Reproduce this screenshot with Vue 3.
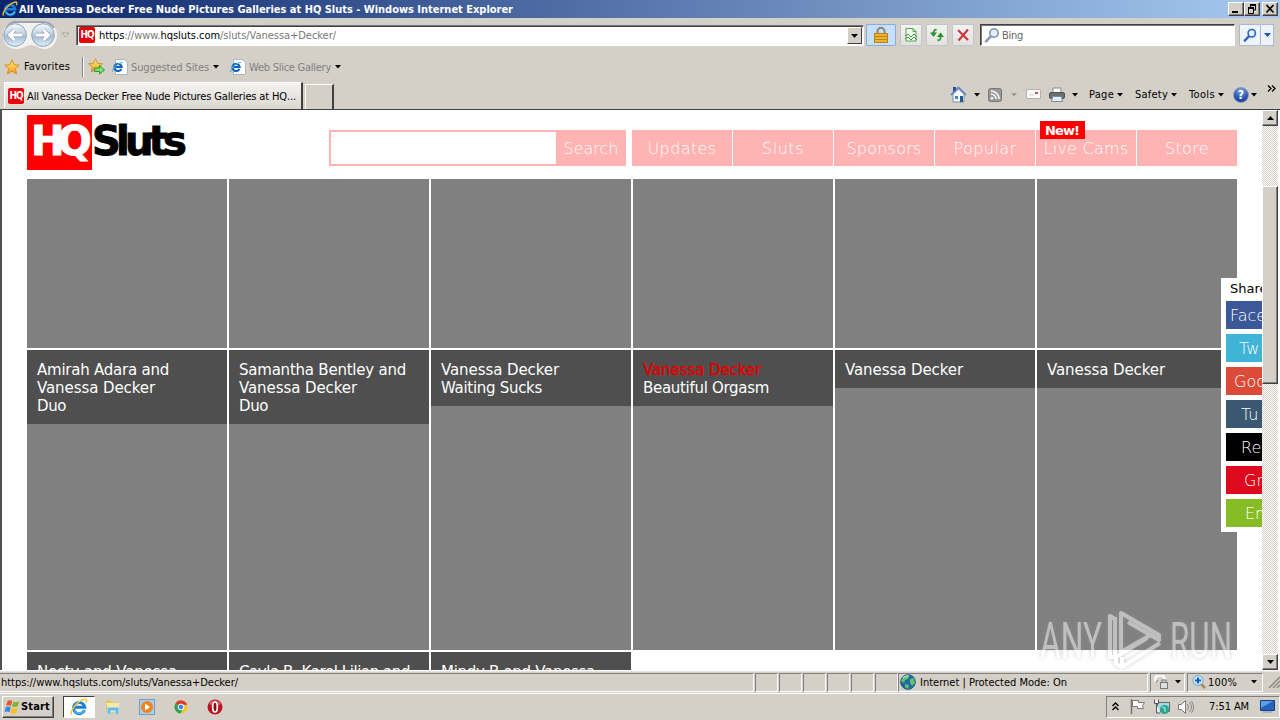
<script setup>
// Spreads or tightens the letters of a label so that it fills the given width.
const vFit = {
  mounted(el, { value }) {
    const n = el.textContent.length
    const natural = el.getBoundingClientRect().width
    el.style.letterSpacing = (value - natural) / n + 'px'
  }
}

const nav = [
  { text: 'Updates', w: 69 },
  { text: 'Sluts', w: 42 },
  { text: 'Sponsors', w: 75 },
  { text: 'Popular', w: 63 },
  { text: 'Live Cams', w: 85, isNew: true },
  { text: 'Store', w: 44 }
]

const galleries = [
  [['Amirah Adara and', 132], ['Vanessa Decker', 118], ['Duo', 29]],
  [['Samantha Bentley and', 167], ['Vanessa Decker', 118], ['Duo', 29]],
  [['Vanessa Decker', 118], ['Waiting Sucks', 101]],
  [['Vanessa Decker', 118, true], ['Beautiful Orgasm', 126]],
  [['Vanessa Decker', 118]],
  [['Vanessa Decker', 118]]
]

const nextRow = [
  ['Nesty and Vanessa', 140],
  ['Cayla B, Karol Lilian and', 171],
  ['Mindy B and Vanessa', 154]
]

const share = [
  { text: 'Face', color: '#3b5998', pad: 4 },
  { text: 'Tw', color: '#40b4d6', pad: 13 },
  { text: 'Goo', color: '#dc4a38', pad: 8 },
  { text: 'Tu', color: '#3b5872', pad: 15 },
  { text: 'Re', color: '#000000', pad: 15 },
  { text: 'Gr', color: '#dc0a1c', pad: 18 },
  { text: 'Em', color: '#86bd24', pad: 19 }
]
</script>

<template>
  <div class="window">
    <svg class="defs" width="0" height="0">
      <defs>
        <linearGradient id="ball" x1="0" y1="0" x2="0" y2="1">
          <stop offset="0" stop-color="#f4f8fc" /><stop offset=".45" stop-color="#c3d3e4" />
          <stop offset=".55" stop-color="#a5bcd3" /><stop offset="1" stop-color="#dff1fb" />
        </linearGradient>
        <linearGradient id="gold" x1="0" y1="0" x2="0" y2="1">
          <stop offset="0" stop-color="#fff08a" /><stop offset="1" stop-color="#f29a13" />
        </linearGradient>
        <symbol id="ie" viewBox="0 0 16 16">
          <path d="M12.9 10.6A5 5 0 1 1 13.1 8.2H4.5" fill="none" stroke="#1c7fd4" stroke-width="2.6" />
          <path d="M12.9 10.6A5 5 0 0 1 4 11" fill="none" stroke="#55baf1" stroke-width="1.2" />
          <path d="M1.6 14.6C-.6 12.4 5.5 3.5 12 1.3c3-1 3.500.7 2.300 3" fill="none" stroke="#f3c43a" stroke-width="1.3" />
        </symbol>
        <symbol id="iepage" viewBox="0 0 16 16">
          <path d="M3.500.5h9l3 3v12h-12z" fill="#fff" stroke="#a9b7c5" />
          <path d="M9.300 10A3.600 3.600 0 1 1 9.600 8H3" fill="none" stroke="#1463b8" stroke-width="2.2" />
          <path d="M.8 13C-.1 10.5 5 4 11 3.300" fill="none" stroke="#55b4e8" stroke-width="1.1" />
        </symbol>
        <symbol id="star" viewBox="0 0 16 16">
          <path d="M8 .8l2.100 4.800 5.200.5-3.900 3.500 1.200 5.300L8 12.200l-4.600 2.700 1.200-5.300L.7 6.100l5.200-.5z" fill="url(#gold)" stroke="#d18a1b" stroke-width=".9" />
        </symbol>
        <symbol id="lens" viewBox="0 0 16 16">
          <path d="M7.200 9L2 14.400" stroke-width="2.6" stroke="currentColor" stroke-linecap="round" />
          <circle cx="10" cy="6" r="4.2" fill="#e4f0fb" stroke="currentColor" stroke-width="1.8" />
        </symbol>
      </defs>
    </svg>

    <header class="titlebar">
      <svg class="i16" viewBox="0 0 16 16"><use href="#ie" /></svg>
      <b v-fit="494">All Vanessa Decker Free Nude Pictures Galleries at HQ Sluts - Windows Internet Explorer</b>
      <div class="winbtns">
        <i><svg width="14" height="12"><path d="M3 9h6" stroke="#000" stroke-width="2" /></svg></i>
        <i><svg width="14" height="12"><path d="M5 2.500h6M5.500 2v3M10.500 2v5H9M3 5.500h5.500M3.500 5v5.500h5V5" fill="none" stroke="#000" /><path d="M5 2h6M3 5h6" stroke="#000" stroke-width="2" /></svg></i>
        <i class="close"><svg width="14" height="12"><path d="M3.500 2l7 7.500M10.500 2l-7 7.500" stroke="#000" stroke-width="1.700" /></svg></i>
      </div>
    </header>

    <div class="addressrow">
      <svg class="travel" width="56" height="30" viewBox="0 0 56 30">
        <path d="M13 2h30c8 1 12 6 12 13s-5 14-12 14c-6 0-9-4-14-4s-8 4-14 4C6 29 1 23 1 15S6 2 13 2z" fill="#f3f2ef" />
        <path d="M4 8Q9 1 15 2h26q7 0 11 6" fill="none" stroke="#9fa3ae" stroke-width="2" />
        <circle cx="13" cy="15" r="11.300" fill="url(#ball)" stroke="#8fa3b8" />
        <circle cx="41" cy="15" r="11.300" fill="url(#ball)" stroke="#8fa3b8" />
        <path d="M20 15H8M12.500 10L7.500 15l5 5M34 15h12M41.500 10l5 5-5 5" fill="none" stroke="#8fa3ba" stroke-width="4.400" />
        <path d="M20 15H8M12.500 10L7.500 15l5 5M34 15h12M41.500 10l5 5-5 5" fill="none" stroke="#fff" stroke-width="3" />
      </svg>
      <svg class="hist" width="9" height="6"><path d="M1 1h7L4.500 5z" fill="#ddd8d0" stroke="#aaa59d" /></svg>
      <div class="address">
        <span class="hq">HQ</span>
        <span class="url" v-fit="237">https<em>://www.</em>hqsluts.com<em>/sluts/Vanessa+Decker/</em></span>
        <i class="drop"><svg width="7" height="4"><path d="M0 0h7L3.500 4z" /></svg></i>
      </div>
      <div class="tool lock">
        <svg width="16" height="18" viewBox="0 0 16 18"><path d="M4.500 9V5.500a3.500 3.700 0 0 1 7 0V9" fill="none" stroke="#8c8570" stroke-width="2" /><rect x="1.500" y="7.500" width="13" height="9" fill="#eeb52c" stroke="#b9821c" /><path d="M2 10.500h12M2 13.500h12" stroke="#bb8421" /></svg>
      </div>
      <div class="tool t1"><svg width="14" height="16" viewBox="0 0 14 16"><path d="M2 1.500h7l3 3v9.500H2zM9 1.500v3h3" fill="#f3fbf0" stroke="#57a257" /><path d="M1 9l3-2 3 3 3-3 3 3M1 12l3-2 3 3 3-3 3 3" fill="none" stroke="#3e963e" /></svg></div>
      <div class="tool t2"><svg width="16" height="16" viewBox="0 0 16 16"><path d="M7.500 3Q4.500 2 4.500 7" fill="none" stroke="#38a33b" stroke-width="2" /><path d="M1 5.500h7L4.500 10z" fill="#249027" /><path d="M8.500 13Q12 14 11.500 9" fill="none" stroke="#38a33b" stroke-width="2" /><path d="M8 10h7l-3.500-4.500z" fill="#249027" /></svg></div>
      <div class="tool t3"><svg width="14" height="14"><path d="M2 2l10 10M12 1.500L2.500 12.500" stroke="#cf3a42" stroke-width="2.200" /></svg></div>
      <div class="search">
        <svg class="i16 grey" viewBox="0 0 16 16"><use href="#lens" /></svg><span v-fit="21">Bing</span>
      </div>
      <div class="tool go"><svg class="i14 blue" viewBox="0 0 16 16"><use href="#lens" /></svg></div>
      <div class="tool godrop"><svg width="7" height="4"><path d="M0 0h7L3.500 4z" fill="#1b58b5" /></svg></div>
    </div>

    <div class="favrow">
      <svg class="i16" viewBox="0 0 16 16"><use href="#star" /></svg>
      <span class="fav" v-fit="46">Favorites</span>
      <i class="sep"></i>
      <svg class="i17" viewBox="0 0 17 17"><g transform="scale(.94)"><use href="#star" width="16" height="16" /></g><path d="M6.500 10h5V7.500l5 4.500-5 4v-2.500h-5z" fill="#7be06c" stroke="#2b9a31" /></svg>
      <svg class="i16 p1" viewBox="0 0 16 16"><use href="#iepage" /></svg>
      <span class="dim" v-fit="78">Suggested Sites</span>
      <svg class="car" width="6" height="4"><path d="M0 0h6L3 3.500z" /></svg>
      <svg class="i16 p2" viewBox="0 0 16 16"><use href="#iepage" /></svg>
      <span class="dim" v-fit="82">Web Slice Gallery</span>
      <svg class="car" width="6" height="4"><path d="M0 0h6L3 3.500z" /></svg>
    </div>

    <div class="tabrow">
      <div class="tab"><span class="hq">HQ</span><span v-fit="269">All Vanessa Decker Free Nude Pictures Galleries at HQ...</span></div>
      <div class="newtab"></div>
      <div class="cmds">
        <svg width="17" height="17" viewBox="0 0 17 17"><path d="M3 8v8h11V8L8.500 3z" fill="#f7fafe" stroke="#8092aa" /><path d="M1 9l7.500-7.500L16 9" fill="none" stroke="#668bc4" stroke-width="1.800" /><path d="M3 1h3v3L3 6z" fill="#2d4fa0" /><path d="M10 10h3v6h-3z" fill="#23588f" /><path d="M5 10h3v3H5z" fill="#3b8ad0" /></svg>
        <svg class="c1" width="6" height="4"><path d="M0 0h6L3 3.500z" /></svg>
        <svg class="c2" width="14" height="14"><rect x=".5" y=".5" width="13" height="13" rx="2" fill="#999" stroke="#777" /><path d="M3 6a5 5 0 0 1 5 5M3 3a8 8 0 0 1 8 8" fill="none" stroke="#fff" stroke-width="1.500" /><circle cx="4" cy="10.300" r="1.200" fill="#fff" /></svg>
        <svg class="c3" width="6" height="4"><path d="M0 0h6L3 3.500z" fill="#999" /></svg>
        <svg class="c4" width="15" height="11"><path d="M.5.5h14v9H.5z" fill="#fafafa" stroke="#b5b1ae" /><path d="M9 3h3v2H9z" fill="#cf5260" /><path d="M3 6h5" stroke="#ccc" /></svg>
        <svg class="c5" width="16" height="16" viewBox="0 0 16 16"><path d="M4 1h8v5H4z" fill="#fff" stroke="#888" /><rect x=".5" y="5.500" width="15" height="6" rx="1.500" fill="#6b6e73" stroke="#505257" /><path d="M3.500 9.500h9l1 5h-11z" fill="#e5effa" stroke="#7c8ba1" /></svg>
        <svg class="c6" width="6" height="4"><path d="M0 0h6L3 3.500z" /></svg>
        <span class="c7" v-fit="25">Page</span><svg class="c8" width="6" height="4"><path d="M0 0h6L3 3.500z" /></svg>
        <span class="c9" v-fit="33">Safety</span><svg class="c8" width="6" height="4"><path d="M0 0h6L3 3.500z" /></svg>
        <span class="c9" v-fit="26">Tools</span><svg class="c8" width="6" height="4"><path d="M0 0h6L3 3.500z" /></svg>
        <span class="help">?</span><svg class="c10" width="6" height="4"><path d="M0 0h6L3 3.500z" /></svg>
        <svg class="more" width="9" height="7"><path d="M1 .5l3 3-3 3M5 .5l3 3-3 3" fill="none" stroke="#000" stroke-width="1.300" /></svg>
      </div>
    </div>

    <div class="viewport">
      <main class="page">
        <div class="head">
          <div class="logo"><b class="logo-hq"><span v-fit="54">HQ</span></b><b class="logo-s" v-fit="90">Sluts</b></div>
          <div class="find"><div class="box"></div><div class="btn"><span v-fit="55">Search</span></div></div>
          <nav>
            <a v-for="n in nav" :key="n.text"><span v-fit="n.w">{{ n.text }}</span><b v-if="n.isNew" class="new"><span v-fit="34">New!</span></b></a>
          </nav>
        </div>
        <div class="grid">
          <div v-for="i in 6" :key="'a' + i" class="card"></div>
          <div v-for="(g, i) in galleries" :key="'b' + i" class="card">
            <div class="cap"><div v-for="(l, j) in g" :key="j" :class="{ hot: l[2] }"><span v-fit="l[1]">{{ l[0] }}</span></div></div>
          </div>
          <div v-for="(l, i) in nextRow" :key="'c' + i" class="card">
            <div class="cap"><div><span v-fit="l[1]">{{ l[0] }}</span></div></div>
          </div>
        </div>
        <aside class="share">
          <p>Share</p>
          <div v-for="s in share" :key="s.text" :style="{ background: s.color, paddingLeft: s.pad + 'px' }">{{ s.text }}</div>
        </aside>
        <svg class="mark" width="210" height="66" viewBox="0 0 210 66">
          <g fill="#fff" font-family="Roboto, sans-serif" font-size="50">
            <text x="4" y="50" textLength="62" lengthAdjust="spacingAndGlyphs">ANY</text>
            <text x="134" y="50" textLength="62" lengthAdjust="spacingAndGlyphs">RUN</text>
          </g>
          <path d="M79 10l-5-3v41h5V8M85 43V4l38 22v5L92 13M86 48V58L124 34M85 43l35-20M86 58l-6-3v-7L111 29" transform="translate(0 1)" fill="none" stroke="#fff" stroke-width="4" stroke-linejoin="round" />
        </svg>
      </main>
      <div class="scroll">
        <i class="sb"><svg width="7" height="4"><path d="M0 4h7L3.500 0z" /></svg></i>
        <i class="thumb"></i>
        <i class="sb"><svg width="7" height="4"><path d="M0 0h7L3.500 4z" /></svg></i>
      </div>
    </div>

    <footer class="status">
      <div class="cell main"><span v-fit="237">https://www.hqsluts.com/sluts/Vanessa+Decker/</span></div>
      <div v-for="i in 6" :key="i" class="cell small"></div>
      <div class="cell zone">
        <svg width="16" height="16" viewBox="0 0 16 16"><circle cx="8" cy="8" r="7.300" fill="#2566a9" stroke="#234e85" /><path d="M3 3q4-3 6-1l-1 3-3 1-1 3-3-2zM10 5l4-1 1 5-3 3-2-3zM5 10l4 1-1 4-3-2z" fill="#59c668" /><path d="M3 4q3-3 6-2" stroke="#bdf0ff" fill="none" /></svg>
        <span v-fit="147">Internet | Protected Mode: On</span>
      </div>
      <div class="cell prot"><svg width="15" height="14" viewBox="0 0 15 14"><path d="M1 7a5 5 0 0 1 10-3" fill="none" stroke="#f8f8f8" stroke-width="3" /><path d="M2 8l2-3" stroke="#888" /><rect x="6.500" y="7.500" width="7" height="6" fill="#ddd" stroke="#777" /><path d="M8 7V5h4v2" fill="none" stroke="#777" /></svg><svg width="6" height="4"><path d="M0 0h6L3 3.500z" /></svg></div>
      <div class="cell zoom"><svg width="14" height="14" viewBox="0 0 14 14"><path d="M8 8l5 5" stroke="#a98c58" stroke-width="2.500" /><circle cx="6" cy="5.500" r="5" fill="#cbe7fd" stroke="#6fa6dc" /><path d="M6 2.500v6M3 5.500h6" stroke="#1462bf" stroke-width="2" /></svg><span v-fit="29">100%</span><svg class="zc" width="6" height="4"><path d="M0 0h6L3 3.500z" /></svg></div>
      <svg class="grip" width="12" height="12"><path d="M1 12L12 1M5 12l7-7M9 12l3-3" stroke="#8c8880" stroke-width="1.500" /></svg>
    </footer>

    <div class="taskbar">
      <div class="start">
        <svg width="17" height="16" viewBox="0 0 17 16"><path d="M3.500 2q2-1.500 4.700 0L7 7Q4 5.500 2 7z" fill="#e5572a" /><path d="M9.200 2.600q3 1.400 6-.6L14 7q-3 1.500-6 .5z" fill="#7db72f" /><path d="M1.700 8.300q3-1.500 5 0l-1.200 5q-2.500-1.500-5 0z" fill="#3e87d4" /><path d="M7.700 9q3 1 6 0l-1.200 5q-3 1.300-6 0z" fill="#f6bd24" /></svg>
        <b v-fit="29">Start</b>
      </div>
      <div class="running"><svg class="i18" viewBox="0 0 16 16"><use href="#ie" /></svg></div>
      <svg class="q1" width="16" height="16" viewBox="0 0 16 16"><path d="M1 1.500h5l1 2h7v10H1z" fill="#e7c765" /><path d="M2 4h12v9H2z" fill="#f8e9a5" /><path d="M2.500 15V8.500h11V15h-3v-3.500h-5V15z" fill="#65b9e4" stroke="#9bd5f2" /></svg>
      <svg class="q2" width="16" height="16"><rect x=".5" y=".5" width="15" height="15" fill="#a9cfee" stroke="#6d9fd0" /><circle cx="8" cy="8" r="6" fill="#f08519" /><path d="M6 4.500v7l5-3.500z" fill="#fff" /></svg>
      <svg class="q3" width="14" height="14" viewBox="0 0 14 14"><circle cx="7" cy="7" r="6.500" fill="#f6c925" /><path d="M7 7L1.300 3.800A6.500 6.500 0 0 1 13 4.300H7z" fill="#df3c30" /><path d="M1.300 3.800A6.500 6.500 0 0 0 6.500 13.500L9.500 8 7 7z" fill="#27a456" /><path d="M7 4.300h6" stroke="#df3c30" /><circle cx="7" cy="7" r="2.900" fill="#4287ef" stroke="#fff" /></svg>
      <svg class="q4" width="16" height="16"><circle cx="8" cy="8" r="7.500" fill="#bd1520" /><path d="M2 5a7 7 0 0 1 12 0q-6 3-12 0z" fill="#e0606a" /><ellipse cx="8" cy="8" rx="2.300" ry="5" fill="#8e0b12" stroke="#fff" stroke-width="1.700" /></svg>
      <div class="tray">
        <svg class="y1" width="7" height="9"><path d="M.5 4l3-3 3 3M.5 8l3-3 3 3" fill="none" stroke="#000" stroke-width="1.400" /></svg>
        <svg class="y2" width="16" height="15"><path d="M1.500 0v15" stroke="#777" stroke-width="1.500" /><path d="M2.500 1.500h6v2h6l-2 3 1 3h-6v-2h-5z" fill="#fff" stroke="#777" /></svg>
        <svg class="y3" width="16" height="16"><path d="M3.500 3.500h12v9h-12z" fill="#a8d5e8" stroke="#666" /><path d="M.5.500v4h4v-4M2.500 5v9h4" fill="#eee" stroke="#555" /><circle cx="10.500" cy="10.500" r="4.500" fill="#26a48d" /><path d="M8 8l3 1v4" stroke="#8be2bd" stroke-width="1.500" fill="none" /></svg>
        <svg class="y4" width="16" height="16"><path d="M.5 5.500h3l4-4v13l-4-4h-3z" fill="#fff" stroke="#777" /><path d="M9.500 5q2 3 0 6M11.500 3q4 5 0 10M13.500 2q4 6 0 12" fill="none" stroke="#888" /></svg>
        <span v-fit="40">7:51 AM</span>
        <svg class="y5" width="15" height="13"><path d="M.5.500h14v10H.5z" fill="#2563bf" stroke="#173f80" /><path d="M1 1h12L1 8z" fill="#5fa0ea" /><path d="M3 12h9" stroke="#7d98bb" /></svg>
      </div>
    </div>
  </div>
</template>

<style>
html, body { margin: 0; overflow: hidden; background: #d4d0c8; }
</style>

<style scoped>
* { box-sizing: border-box; }
svg { display: block; flex: none; }
i, em { font-style: normal; }
span, .titlebar b, .start b, .logo-s { display: inline-block; white-space: pre; flex: none; }
.defs { position: absolute; }
.window {
  width: 1280px; height: 720px; display: flex; flex-direction: column; overflow: hidden;
  background: #d4d0c8; color: #000;
  font: 11px/14px "DejaVu Sans Condensed", "DejaVu Sans", sans-serif; font-stretch: condensed;
}
.i14 { width: 14px; height: 14px; }
.i16 { width: 16px; height: 16px; }
.i17 { width: 17px; height: 17px; }
.i18 { width: 18px; height: 18px; }
.grey { color: #8b9bb0; }
.blue { color: #2862c8; }

.titlebar { height: 18px; flex: none; display: flex; align-items: center; padding-left: 2px; background: linear-gradient(90deg, #0a246a, #a6caf0); color: #fff; }
.titlebar b { margin-left: 1px; padding-top: 1px; }
.winbtns { margin-left: auto; display: flex; padding-right: 2px; }
.winbtns i, .sb, .thumb { background: #d4d0c8; border: 1px solid; border-color: #fff #404040 #404040 #fff; box-shadow: inset -1px -1px #808080; }
.winbtns i { width: 16px; height: 14px; }
.winbtns .close { margin-left: 2px; }

.addressrow { height: 34px; flex: none; display: flex; align-items: center; }
.travel { margin-left: 2px; }
.hist { margin-left: 3px; }
.address { margin-left: 6px; width: 788px; height: 21px; background: #fff; border: 1px solid; border-color: #777 #fff #fff #777; box-shadow: inset 1px 1px #404040; display: flex; align-items: center; padding-left: 2px; }
.hq { width: 16px; height: 16px; line-height: 16px; border-radius: 2px; background: #ed0006; color: #fff; font-weight: bold; font-size: 10px; letter-spacing: -1px; text-align: center; }
.url { margin-left: 4px; padding-top: 2px; }
.url em { color: #777; }
.drop { margin: 1px 1px 0 auto; width: 15px; height: 17px; display: flex; align-items: center; justify-content: center; background: #d4d0c8; border: 1px solid; border-color: #fff #404040 #404040 #fff; }
.tool { height: 22px; border: 1px solid #c1c6cd; border-radius: 1px; background: linear-gradient(#f2f2f0, #e2e1df); display: flex; align-items: center; justify-content: center; flex: none; }
.lock { width: 30px; margin-left: 2px; background: #c8dffb; border-color: #86addc; }
.t1 { width: 22px; margin-left: 4px; }
.t2 { width: 22px; margin-left: 4px; }
.t3 { width: 22px; margin-left: 4px; }
.search { width: 255px; height: 22px; margin-left: 6px; background: #fff; border: 1px solid; border-color: #404040 #fff #fff #404040; box-shadow: inset 1px 1px #777; display: flex; align-items: center; padding-left: 3px; color: #666; }
.search span { margin-left: 2px; padding-top: 2px; }
.go { width: 22px; margin-left: 4px; background: #eef3fa; border-color: #a9b9ce; }
.godrop { width: 13px; border-left: 0; background: #eef3fa; border-color: #a9b9ce; }

.favrow { height: 29px; flex: none; display: flex; align-items: center; padding-left: 4px; }
.fav { margin-left: 4px; }
.sep { width: 2px; height: 20px; margin: 0 4px 0 12px; border-left: 1px solid #808080; border-right: 1px solid #fff; }
.p1 { margin-left: 7px; }
.p2 { margin-left: 11px; }
.dim { color: #808080; margin-left: 3px; padding-top: 2px; }
.car { margin-left: 4px; }

.tabrow { height: 28px; flex: none; display: flex; padding-left: 4px; }
.tab { width: 299px; height: 27px; margin-top: 1px; border: 1px solid #fff; border-right: 2px solid #404040; border-bottom: 0; background: linear-gradient(#f4f3f1, #dad7d0); display: flex; align-items: center; padding-left: 3px; }
.tab span + span { margin-left: 3px; padding-top: 2px; }
.newtab { width: 29px; height: 25px; margin: 3px 0 0 2px; border: 1px solid #fff; border-right: 2px solid #404040; border-bottom: 0; }
.cmds { margin: -1px 0 0 616px; display: flex; align-items: center; }
.c1 { margin-left: 7px; }
.c2 { margin-left: 8px; }
.c3 { margin-left: 9px; }
.c4 { margin-left: 9px; }
.c5 { margin-left: 8px; }
.c6 { margin-left: 7px; }
.c7 { margin-left: 11px; }
.c8 { margin-left: 3px; }
.c9 { margin-left: 12px; }
.help { margin-left: 9px; width: 16px; height: 16px; border-radius: 50%; background: radial-gradient(circle at 50% 20%, #7aa4e6, #1c48a8 70%); border: 1px solid #8798b8; color: #fff; font-weight: bold; font-size: 12px; text-align: center; line-height: 14px; }
.c10 { margin-left: 2px; }
.more { margin: -12px 0 0 10px; }

.viewport { height: 561px; flex: none; display: flex; border-top: 1px solid #404040; border-left: 2px solid #505050; background: #fff; }
.page { position: relative; width: 1260px; height: 560px; overflow: hidden; background: #fff; padding-left: 25px; font-family: "DejaVu Sans", sans-serif; font-stretch: normal; }
.head { height: 69px; display: flex; align-items: flex-start; }
.logo { display: flex; width: 302px; margin-top: 5px; font-size: 40px; line-height: 52px; -webkit-text-stroke: 1px; }
.logo-hq { width: 65px; height: 55px; background: #f00; color: #fff; padding-left: 4px; flex: none; }
.find { display: flex; width: 297px; height: 36px; margin-top: 20px; }
.box { width: 227px; border: 2px solid #ffb3b3; border-right: 0; background: #fff; flex: none; }
.btn { width: 70px; background: #ffb3b3; color: #fff; font-size: 16px; font-weight: 200; display: flex; align-items: center; justify-content: center; padding-top: 2px; }
nav { margin: 20px 0 0 6px; display: flex; gap: 1px; height: 36px; }
nav a { position: relative; width: 100px; background: #ffb3b3; color: #fff; font-size: 16px; font-weight: 200; display: flex; align-items: center; justify-content: center; padding-top: 2px; }
.new { position: absolute; left: 4px; top: -9px; width: 45px; height: 18px; background: #f00; font-size: 13px; line-height: 19px; padding-left: 5px; font-weight: bold; }
.grid { display: grid; grid-template-columns: repeat(6, 200px); grid-template-rows: 169px 300px 300px; gap: 2px; }
.card { background: #808080; }
.cap { background: #4f4f4f; padding: 11px 10px 9px; color: #fff; font-size: 15px; line-height: 18px; }
.cap div { height: 18px; }
.cap .hot { color: #e10000; -webkit-text-stroke: .4px; }
.share { position: absolute; left: 1219px; top: 168px; width: 120px; height: 254px; background: #fff; padding: 4px 5px; }
.share p { margin: 0 0 5px; padding-left: 4px; font-size: 13px; line-height: 14px; }
.share div { height: 28px; margin-bottom: 5px; color: #fff; font-size: 16px; font-weight: 200; line-height: 30px; }
.mark { position: absolute; left: 1034px; top: 498px; opacity: .5; filter: drop-shadow(0 0 2px #999); }
.scroll { width: 16px; height: 560px; display: flex; flex-direction: column; background: repeating-conic-gradient(#fff 0 25%, #d4d0c8 0 50%) 0 0 / 2px 2px; }
.sb { height: 16px; display: flex; align-items: center; justify-content: center; }
.thumb { margin: 60px 0 270px; height: 198px; }

.status { height: 24px; flex: none; display: flex; align-items: center; border-top: 1px solid #fff; border-bottom: 1px solid #fff; box-shadow: inset 0 1px #e6e3de; }
.cell { height: 19px; border: 1px solid; border-color: #808080 #fff #fff #808080; display: flex; align-items: center; flex: none; }
.cell span { padding-top: 2px; }
.main { width: 754px; border-left: 0; padding-left: 1px; }
.small { width: 23px; margin-left: 1px; }
.zone { width: 250px; margin-left: 1px; padding-left: 1px; }
.small + .zone { margin-left: 0; }
.zone span { margin-left: 4px; }
.prot { width: 35px; margin-left: 2px; padding-left: 3px; gap: 6px; }
.zoom { width: 76px; margin-left: 2px; padding-left: 4px; }
.zoom span { margin-left: 2px; }
.zc { margin-left: 14px; }
.grip { margin-left: auto; }

.taskbar { height: 25px; flex: none; display: flex; align-items: center; padding-left: 2px; }
.start { width: 52px; height: 22px; border: 1px solid; border-color: #fff #404040 #404040 #fff; box-shadow: inset -1px -1px #808080; display: flex; align-items: center; padding-left: 1px; }
.start b { padding-top: 1px; }
.running { width: 32px; height: 22px; margin-left: 9px; border: 1px solid; border-color: #404040 #fff #fff #404040; background: #fff; display: flex; align-items: center; justify-content: center; }
.q1 { margin-left: 10px; }
.q2 { margin-left: 18px; }
.q3 { margin-left: 19px; }
.q4 { margin-left: 19px; }
.tray { margin-left: auto; width: 174px; height: 22px; border: 1px solid; border-color: #808080 #fff #fff #808080; display: flex; align-items: center; padding-left: 5px; }
.y2 { margin-left: 11px; }
.y3 { margin-left: 8px; }
.y4 { margin-left: 8px; }
.tray span { margin-left: 15px; padding-top: 1px; }
.y5 { margin-left: 11px; }
</style>
